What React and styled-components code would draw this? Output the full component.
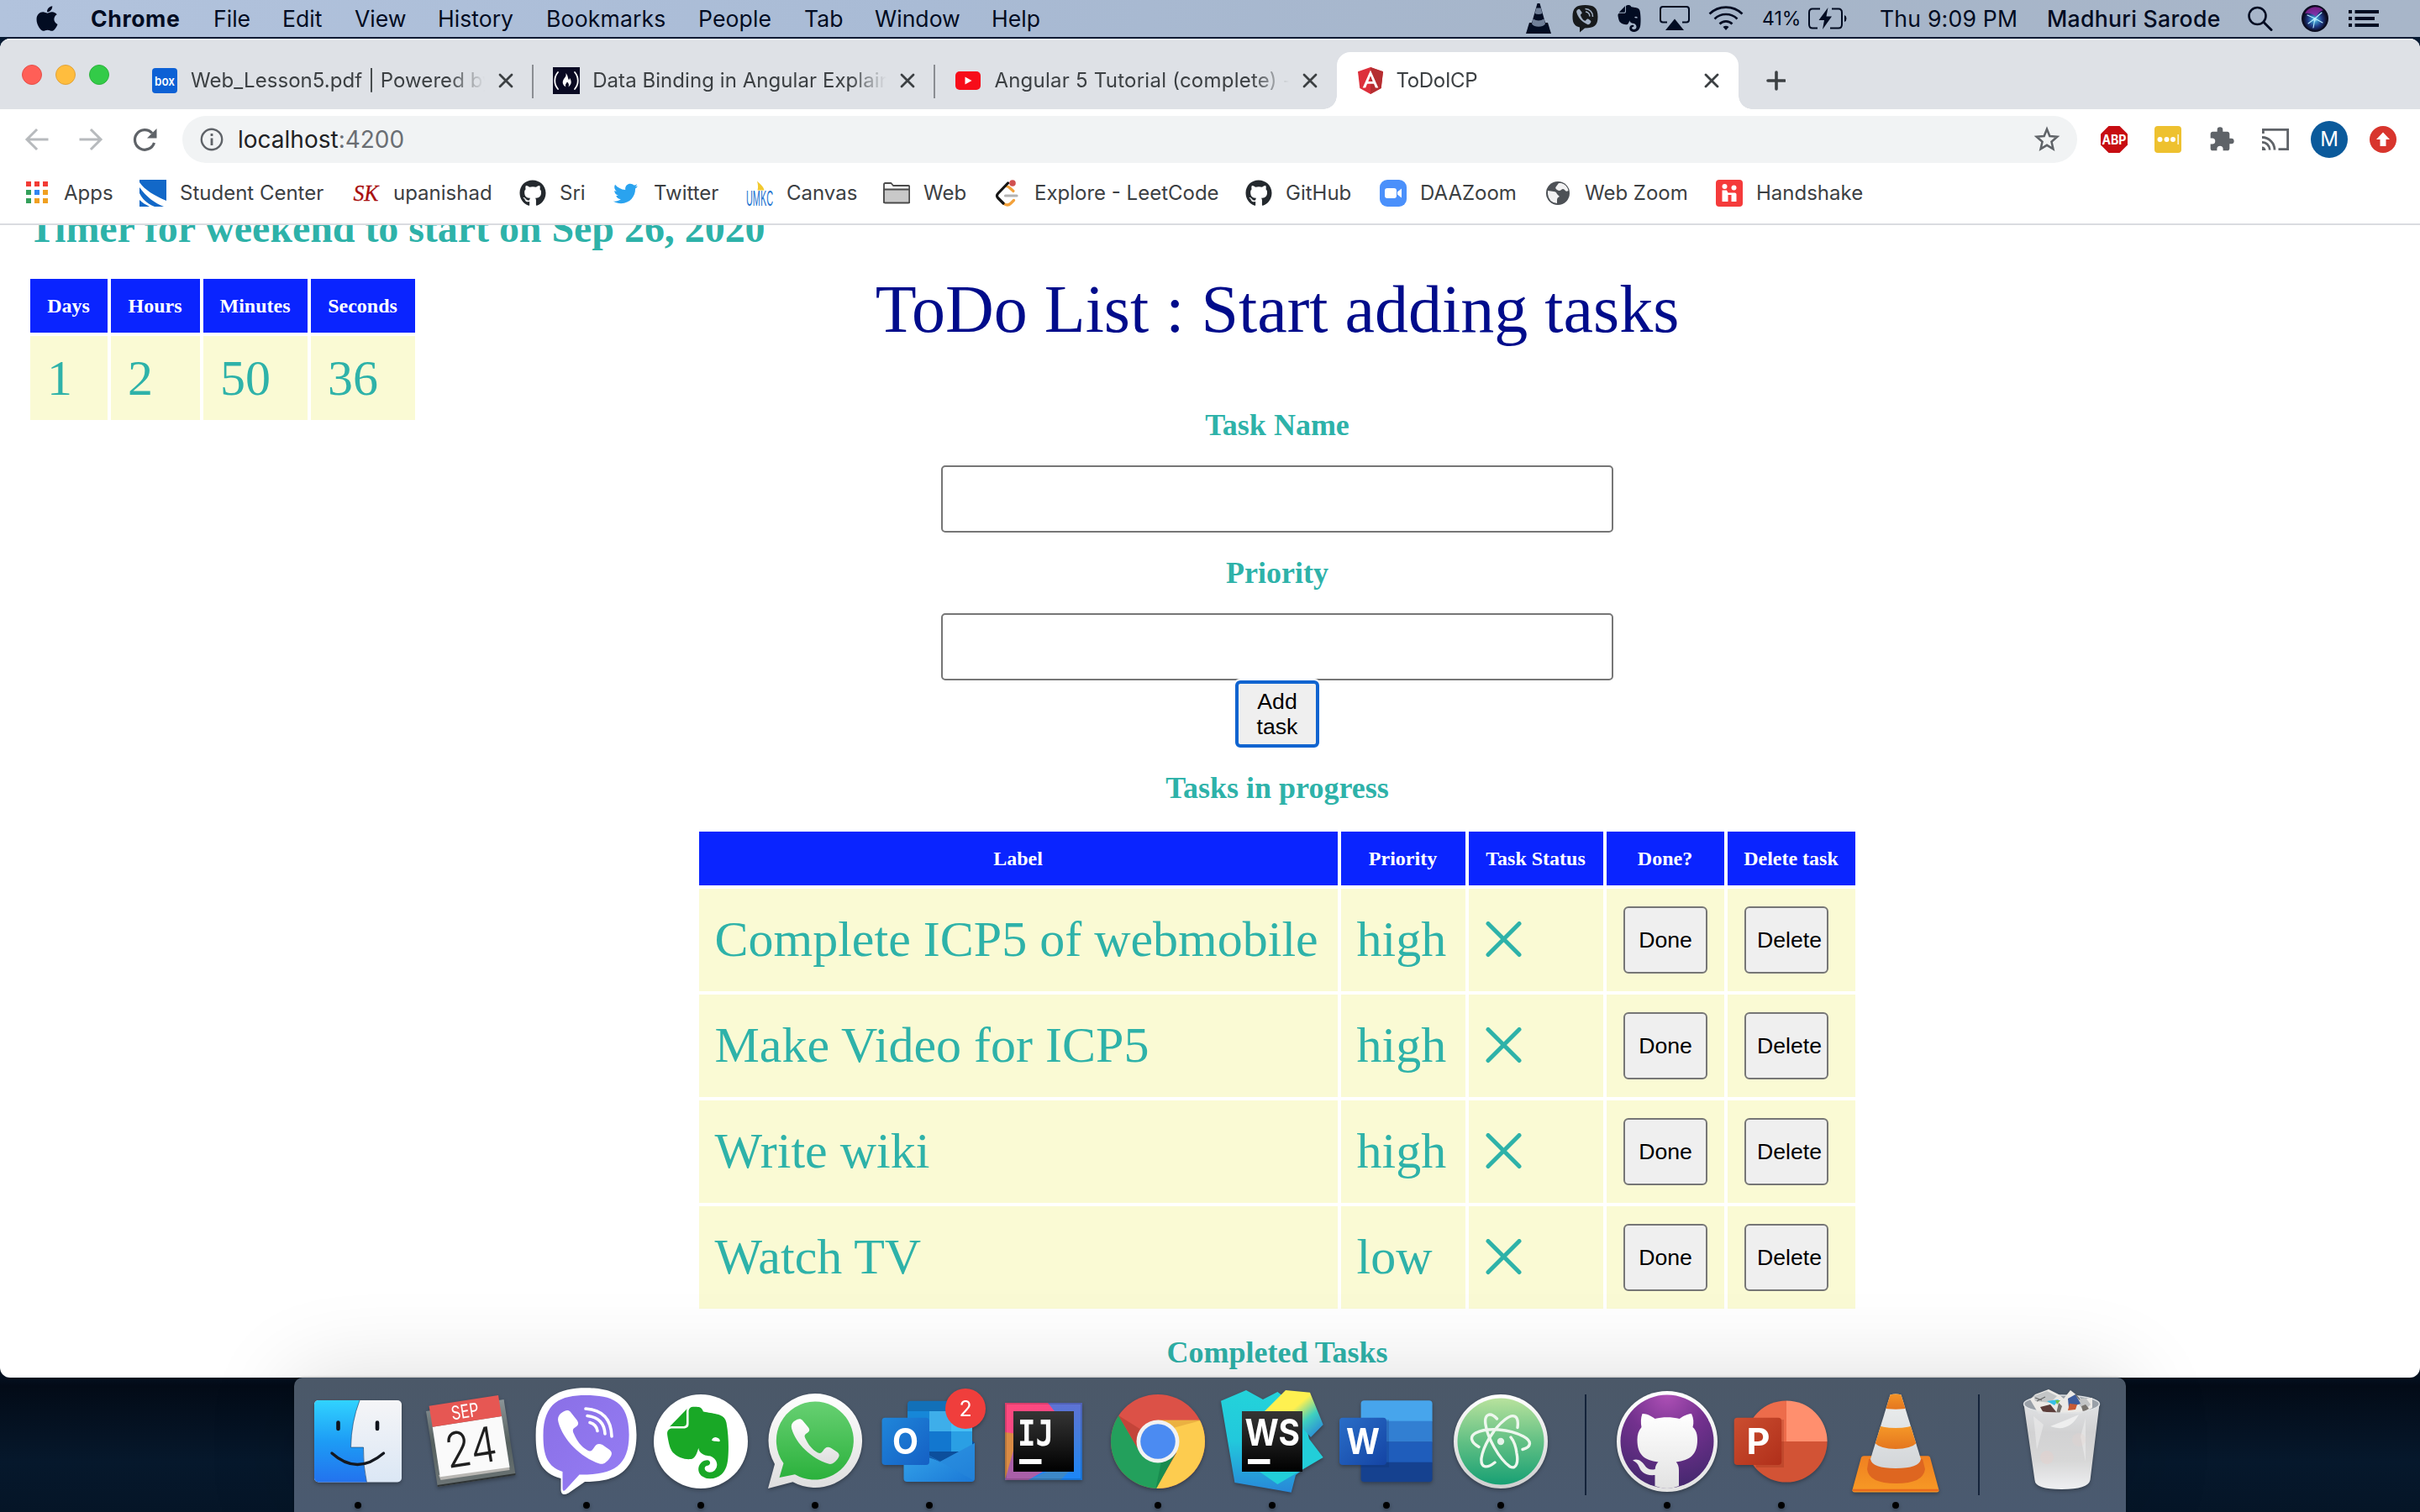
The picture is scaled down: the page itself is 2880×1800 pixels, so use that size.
import React from "react";
import styled, { createGlobalStyle, css } from "styled-components";
import { FaGithub, FaTwitter, FaApple } from "react-icons/fa";
import { SiEvernote } from "react-icons/si";

const serif = '"Liberation Serif", "Times New Roman", serif';
const ui = 'Inter, "Liberation Sans", sans-serif';
const arial = '"Liberation Sans", Arial, sans-serif';
const teal = "#2eb2a9";

const GlobalStyle = createGlobalStyle`
  *, *::before, *::after { box-sizing: border-box; }
  body { margin: 0; background: #030a16; overflow: hidden; }
  svg { display: block; flex: none; }
`;

const Desktop = styled.div`
  width: 2880px;
  height: 1800px;
  display: flex;
  flex-direction: column;
  overflow: hidden;
  background: linear-gradient(180deg, #071a33 0, #04101f 1640px, #030b17 1650px, #06182c 1740px, #051527 1800px);
  font-family: ${ui};
`;

/* ---------- menu bar ---------- */

const MenuBar = styled.header`
  flex: none;
  height: 44px;
  display: flex;
  align-items: center;
  background: linear-gradient(90deg, #b2c3dd 0, #a9bbd5 1100px, #a6b5c9 1900px, #a8b6c9 2880px);
  color: #020c22;
`;

const MenuSlot = styled.div`
  flex: none;
  width: ${(p) => p.$w}px;
  height: 44px;
  display: flex;
  align-items: center;
  white-space: nowrap;
  font-size: ${(p) => p.$size || 26.6}px;
  font-weight: ${(p) => p.$weight || 400};
  letter-spacing: ${(p) => p.$ls || 0}px;
`;

/* ---------- browser window ---------- */

const BrowserWindow = styled.section`
  flex: none;
  margin-top: 2px;
  height: 1594px;
  display: flex;
  flex-direction: column;
  border-radius: 12px;
  background: #fff;
  overflow: hidden;
`;

const TabStrip = styled.div`
  flex: none;
  height: 84px;
  display: flex;
  background: #dee1e6;
  border-top: 2px solid #eceef0;
`;

const TrafficLights = styled.div`
  flex: none;
  width: 156px;
  display: flex;
  gap: 16px;
  padding: 29px 0 0 26px;
`;

const Light = styled.span`
  width: 24px;
  height: 24px;
  border-radius: 50%;
  border: 1px solid ${(p) => p.$edge};
  background: ${(p) => p.$color};
`;

const TabBox = styled.div`
  flex: none;
  width: 478.2px;
  height: 68px;
  margin-top: 14px;
  padding: 0 23px 0 24px;
  display: flex;
  align-items: center;
  position: relative;
  color: #3c4043;
  ${(p) =>
    p.$active &&
    css`
      background: #fff;
      border-radius: 16px 16px 0 0;
      &::before,
      &::after {
        content: "";
        position: absolute;
        bottom: 0;
        width: 16px;
        height: 16px;
      }
      &::before {
        left: -16px;
        background: radial-gradient(circle at 0 0, transparent 15.5px, #fff 16px);
      }
      &::after {
        right: -16px;
        background: radial-gradient(circle at 100% 0, transparent 15.5px, #fff 16px);
      }
    `}
  ${(p) =>
    p.$divider &&
    css`
      &::after {
        content: "";
        position: absolute;
        right: -1px;
        top: 15px;
        width: 2px;
        height: 40px;
        background: #8a8d92;
      }
    `}
`;

const TabTitle = styled.span`
  flex: 1;
  min-width: 0;
  margin: 0 16px 0 15px;
  overflow: hidden;
  white-space: nowrap;
  font-size: 24px;
  line-height: 32px;
  letter-spacing: ${(p) => p.$ls || 0}px;
  mask-image: linear-gradient(90deg, #000 calc(100% - 44px), transparent);
`;

const Toolbar = styled.div`
  flex: none;
  height: 72px;
  display: flex;
  align-items: center;
  padding-left: 28px;
`;

const NavSlot = styled.div`
  flex: none;
  width: ${(p) => p.$w || 64}px;
  display: flex;
`;

const Omnibox = styled.div`
  flex: none;
  width: 2255px;
  height: 56px;
  border-radius: 28px;
  background: #f1f3f4;
  display: flex;
  align-items: center;
  padding: 0 20px 0 21px;
`;

const Url = styled.span`
  flex: 1;
  margin-left: 17px;
  font-size: 28px;
  color: #202124;
`;

const Port = styled.span`
  color: #6a6e73;
`;

const Avatar = styled.div`
  flex: none;
  width: 44px;
  height: 44px;
  border-radius: 50%;
  background: #0b5a9b;
  color: #fff;
  font-size: 24px;
  line-height: 44px;
  text-align: center;
`;

const BookmarkBar = styled.nav`
  flex: none;
  height: 66px;
  padding: 0 0 8px 28px;
  display: flex;
  align-items: center;
  border-bottom: 2px solid #dadce0;
`;

const Bookmark = styled.div`
  flex: none;
  width: ${(p) => p.$w}px;
  display: flex;
  align-items: center;
  gap: 16px;
  white-space: nowrap;
  font-size: 24px;
  line-height: 30px;
  color: #3c4043;
`;

/* ---------- page ---------- */

const Viewport = styled.main`
  flex: 1;
  min-height: 0;
  overflow: hidden;
  font-family: ${serif};
  color: ${teal};
`;

const Scrolled = styled.div`
  margin-top: -24px;
`;

const TimerHeading = styled.h2`
  margin: 0 0 0 36px;
  font-size: 48px;
  line-height: 56px;
  letter-spacing: -0.05px;
  text-indent: -2px;
`;

const Columns = styled.div`
  display: flex;
`;

const Aside = styled.div`
  flex: none;
  width: 832px;
  padding: 32px 0 0 36px;
`;

const Main = styled.div`
  flex: none;
  width: 1376px;
  padding-top: 22px;
  display: flex;
  flex-direction: column;
  align-items: center;
`;

const Title = styled.h1`
  margin: 0;
  font-size: 80px;
  font-weight: 400;
  line-height: 92px;
  color: #000c8b;
`;

const SectionHeading = styled.h3`
  margin: ${(p) => p.$top}px 0 ${(p) => p.$bottom || 27}px;
  font-size: 36px;
  line-height: 42px;
`;

const Field = styled.input`
  display: block;
  width: 800px;
  height: 80px;
  border: 2px solid #767676;
  border-radius: 5px;
  background: #fff;
`;

const Button = styled.button`
  display: block;
  width: 100px;
  height: 80px;
  margin: 0;
  padding: 0 13px;
  border: 2px solid #767676;
  border-radius: 6px;
  background: #efefef;
  color: #000;
  font: 26.67px/30px ${arial};
  ${(p) =>
    p.$focused &&
    css`
      border: 4px solid #1064d0;
      box-shadow: 0 0 0 2px #fff;
      position: relative;
    `}
`;

const Table = styled.div`
  display: grid;
  width: max-content;
  grid-template-columns: ${(p) => p.$columns};
  gap: 4px;
`;

const HeadCell = styled.div`
  height: 64px;
  padding-right: 1px;
  display: flex;
  align-items: center;
  justify-content: center;
  background: #0a24ff;
  color: #fff;
  font-size: 24px;
  font-weight: 700;
  line-height: 28px;
`;

const Cell = styled.div`
  height: ${(p) => p.$h || 122}px;
  padding: ${(p) => (p.$text ? "0 20px 2px 18.500px" : "0 20px 1px 20px")};
  display: flex;
  align-items: center;
  background: #fafad4;
  font-size: 60px;
  line-height: 68px;
  white-space: nowrap;
`;

/* ---------- dock ---------- */

const DockBar = styled.footer`
  flex: none;
  align-self: center;
  width: 2180px;
  height: 160px;
  padding: 0 8px;
  display: flex;
  position: relative;
  border-radius: 10px 10px 0 0;
  background: linear-gradient(180deg, #4b5868, #4a5a70);
  box-shadow: 0 0 3px rgba(0, 0, 0, 0.4), 0 0 110px rgba(0, 0, 0, 0.14);
`;

const DockSlot = styled.div`
  flex: none;
  width: 136px;
  height: 160px;
  position: relative;
  filter: drop-shadow(0 2px 2px rgba(0, 0, 0, 0.3));
`;

const RunningDot = styled.i`
  position: absolute;
  left: 64px;
  bottom: 4px;
  width: 8px;
  height: 8px;
  border-radius: 50%;
  background: #000;
`;

const DockDivider = styled.div`
  flex: none;
  width: 2px;
  height: 120px;
  margin: 20px ${(p) => 60 - p.$before}px 0 ${(p) => p.$before}px;
  background: #14233a;
`;

/* ---------- small icons ---------- */

const Close = () => (
  <svg width="18" height="18" viewBox="0 0 18 18" stroke="#3c4043" strokeWidth="2.8" strokeLinecap="round">
    <path d="M2 2l14 14M16 2L2 16" />
  </svg>
);

const BoxIcon = () => (
  <svg width="32" height="32" viewBox="0 0 32 32">
    <rect x="1" y="1" width="30" height="30" rx="4" fill="#0d61d5" />
    <text x="16" y="21.5" fontFamily={ui} fontWeight="600" fontSize="15" textLength="24" lengthAdjust="spacingAndGlyphs" textAnchor="middle" fill="#fff">box</text>
  </svg>
);

const CampIcon = () => (
  <svg width="32" height="32" viewBox="0 0 32 32">
    <rect width="32" height="32" fill="#0a0a23" />
    <g fill="none" stroke="#fff" strokeWidth="1.8" strokeLinecap="round">
      <path d="M6 6C1 12 1 20 6 26M26 6c5 6 5 14 0 20" />
    </g>
    <path d="M15.500 7c3 4 2 6 3.500 8 .8 0 1-1.500 .8-2.500 2.700 4 2.700 8-1.300 11 1-3 .4-4-1.500-6-1 2-3 3-1.500 6-4.500-2.500-4.500-6.500-2.500-9.500 2-2.500 3-3.500 2.500-7z" fill="#fff" />
  </svg>
);

const YoutubeIcon = () => (
  <svg width="32" height="32" viewBox="0 0 32 32">
    <rect x="1" y="5" width="30" height="22" rx="5" fill="#f70d1a" />
    <path d="M12.500 11.500l8 4.500-8 4.500z" fill="#fff" />
  </svg>
);

const AngularIcon = () => (
  <svg width="32" height="32" viewBox="0 0 32 32">
    <path d="M16 0L1 5.300l2.300 19.700L16 32l12.700-7L31 5.300z" fill="#dd2f3b" />
    <path d="M16 0v32l12.700-7L31 5.300z" fill="#b52e31" />
    <path d="M16 3.500L6.700 24.500h3.500l1.900-4.700h7.900l1.900 4.700h3.400zM16 10.200l2.700 6.700h-5.400z" fill="#fff" fillRule="evenodd" />
  </svg>
);

const Arrow = ({ flip }) => (
  <svg width="32" height="32" viewBox="0 0 32 32" fill="none" stroke="#b7babd" strokeWidth="3" strokeLinecap="square">
    <path d={flip ? "M4 16h23M17 5l11 11-11 11" : "M28 16H5M15 5L4 16l11 11"} />
  </svg>
);

const Reload = () => (
  <svg width="32" height="32" viewBox="0 0 32 32">
    <path d="M27.500 20A11.800 11.800 0 1 1 25 8.500" fill="none" stroke="#5f6368" strokeWidth="3.200" />
    <path d="M30.500 3v11.500H19z" fill="#5f6368" />
  </svg>
);

const InfoIcon = () => (
  <svg width="28" height="28" viewBox="0 0 28 28" fill="none" stroke="#5f6368" strokeWidth="2.400">
    <circle cx="14" cy="14" r="12.200" />
    <path d="M14 12.500V21M14 7v3" strokeWidth="2.800" />
  </svg>
);

const Star = () => (
  <svg width="32" height="32" viewBox="0 0 24 24" fill="none" stroke="#5f6368" strokeWidth="1.900" strokeLinejoin="miter">
    <path d="M12 2.800l2.500 6.200 6.700.6-5.100 4.400 1.500 6.500-5.600-3.400-5.600 3.400 1.500-6.500-5.100-4.400 6.700-.6z" />
  </svg>
);

const Abp = () => (
  <svg width="32" height="32" viewBox="0 0 32 32">
    <path d="M9.500 0h13L32 9.500v13L22.500 32h-13L0 22.500v-13z" fill="#c70d12" />
    <text x="16" y="21.500" fontFamily={ui} fontWeight="700" fontSize="15.500" textLength="29" lengthAdjust="spacingAndGlyphs" textAnchor="middle" fill="#fff">ABP</text>
  </svg>
);

const Dots = () => (
  <svg width="32" height="32" viewBox="0 0 32 32">
    <rect width="32" height="32" rx="4" fill="#eec12f" />
    <g fill="#fff">
      <circle cx="6.500" cy="16" r="3" />
      <circle cx="14.500" cy="16" r="3" />
      <circle cx="22" cy="16" r="3" />
      <rect x="27.500" y="10" width="1.300" height="12" />
    </g>
  </svg>
);

const Puzzle = () => (
  <svg width="32" height="32" viewBox="0 0 24 24" fill="#5f6368">
    <path d="M20.500 11H19V7c0-1.100-.9-2-2-2h-4V3.500a2.500 2.500 0 0 0-5 0V5H4c-1.100 0-2 .9-2 2v3.800h1.500a2.700 2.700 0 0 1 0 5.400H2V20c0 1.100.9 2 2 2h3.800v-1.500a2.700 2.700 0 0 1 5.400 0V22H17c1.100 0 2-.9 2-2v-4h1.500a2.500 2.500 0 0 0 0-5z" />
  </svg>
);

const Cast = () => (
  <svg width="34" height="28" viewBox="0 0 34 28" fill="none" stroke="#5f6368" strokeWidth="2.800">
    <path d="M2.400 7V2.400h29.200v23.200H20.500" />
    <path d="M1 11.500A15 15 0 0 1 16 26.500M1 17.300a9.200 9.200 0 0 1 9.200 9.200" />
    <path d="M1 22.500a4.500 4.500 0 0 1 4.500 4.500H1z" fill="#5f6368" stroke="none" />
  </svg>
);

const Update = () => (
  <svg width="32" height="32" viewBox="0 0 32 32">
    <circle cx="16" cy="16" r="16" fill="#d8352d" />
    <path d="M16 7.500l8 8.500h-4.500v8h-7v-8H8z" fill="#fff" />
  </svg>
);

const AppsIcon = () => {
  const colors = ["#f23c35", "#f23c35", "#f23c35", "#34a05a", "#3286f0", "#f0a020", "#34a05a", "#f0a020", "#f0a020"];
  return (
    <svg width="32" height="32" viewBox="0 0 32 32">
      {colors.map((c, i) => (
        <rect key={i} x={3 + (i % 3) * 10} y={2 + Math.floor(i / 3) * 10} width="6" height="6" fill={c} />
      ))}
    </svg>
  );
};

const StudentIcon = () => (
  <svg width="32" height="32" viewBox="0 0 32 32">
    <rect width="32" height="32" fill="#1268c8" />
    <path d="M0 3c6 9 18 16 32 22v7h-3C18 28 8 20 0 9z" fill="#fff" />
    <path d="M0 12c4 7 12 14 24 20h-8C8 28 4 24 0 18z" fill="#1268c8" />
    <path d="M0 16c3 6 8 12 18 16h-6C8 30 3 27 0 24z" fill="#fff" />
  </svg>
);

const SkIcon = () => (
  <svg width="32" height="32" viewBox="0 0 32 32">
    <text x="15.500" y="24.500" fontFamily={serif} fontStyle="italic" fontSize="28" textLength="30" lengthAdjust="spacingAndGlyphs" textAnchor="middle" fill="#a80d0d" stroke="#a80d0d" strokeWidth="0.300">SK</text>
  </svg>
);

const UmkcIcon = () => (
  <svg width="32" height="32" viewBox="0 0 32 32">
    <path d="M13 1.500c4 4 7.500 6 8.500 11h-8c1-4 .5-7-.5-11z" fill="#f2c92f" />
    <text x="0" y="31" fontFamily={arial} fontSize="26" textLength="32" lengthAdjust="spacingAndGlyphs" fill="#2273d0">UMKC</text>
  </svg>
);

const FolderIcon = () => (
  <svg width="32" height="32" viewBox="0 0 32 32" stroke="#4a4a4a" strokeWidth="1.800" strokeLinejoin="round">
    <path d="M1 27V5.500Q1 4 2.500 4h7L12 7h18q1.200 0 1.200 1.500V27z" fill="#f6f6f6" />
    <path d="M1 11.500h30.200V26q0 1.500-1.500 1.500H2.500Q1 27.500 1 26z" fill="#c9c9c9" />
  </svg>
);

const LeetIcon = () => (
  <svg width="32" height="32" viewBox="0 0 32 32" fill="none" strokeWidth="3.200" strokeLinecap="round" strokeLinejoin="round">
    <path d="M11 28q5 4 9 0l3.500-3.500" stroke="#f3a13a" />
    <path d="M15.500 8q1.500 0 3 1.500l4.500 4" stroke="#f3a13a" />
    <path d="M16.500 4L5 16q-3 3 0 6l6 6" stroke="#161616" />
    <path d="M13.500 19h13.500" stroke="#b3b3b3" />
    <circle cx="22" cy="4" r="3.800" fill="#d05050" />
  </svg>
);

const ZoomIcon = () => (
  <svg width="32" height="32" viewBox="0 0 32 32">
    <rect width="32" height="32" rx="9" fill="#4a90fb" />
    <rect x="6" y="10" width="14" height="12" rx="3" fill="#fff" />
    <path d="M21 14.500l5-4v11l-5-4z" fill="#fff" />
  </svg>
);

const Globe = () => (
  <svg width="32" height="32" viewBox="0 0 32 32">
    <circle cx="16" cy="16" r="14" fill="#4d5156" />
    <path d="M4 13l7 1q3 0 4 3l3 3q-3 1-3 4v4Q5 27 4 17zM17 4l3 0q7 2 8.500 9-3 2-4.500-1-2-2-4 0t-5 0q-3-2-1-4z" fill="#fff" opacity=".92" />
  </svg>
);

const HandshakeIcon = () => (
  <svg width="32" height="32" viewBox="0 0 32 32">
    <rect width="32" height="32" rx="4" fill="#f53b3b" />
    <g fill="#fff">
      <circle cx="10.500" cy="8" r="3" />
      <circle cx="21.500" cy="9.500" r="3" />
      <path d="M7.500 12.500h5.500l1.500 3h8q2 0 2 2V26H18.500v-8h-4V26h-7z" />
    </g>
  </svg>
);

const VlcMini = () => (
  <svg width="30" height="36" viewBox="0 0 30 36" fill="#020c22">
    <path d="M4 23h22l4 13H0z" />
    <path d="M13.500 0h3l7 25a9.500 9.500 0 0 1-17 0z" />
    <path d="M12.400 5.500h5.400L19.500 12q-4.500 2-9 0zM8.500 18.500q6.500 4 13 0l1.500 6a9 6 0 0 1-16 0z" fill="#6f7f98" />
  </svg>
);

const handset =
  "M34 50C34 46 36 43.500 39 41.500C43 38.500 46.500 38 49 41L56.500 50.500C59 54 58.500 56.500 55.500 58.500C51.500 61 51 62.500 53 67C56.500 75.500 62 82.500 69 86.500C72 88 74 88 76.500 84C79 79.500 82 77.500 87 80L95.500 86C99 89 98.500 92 95.500 96C92 100.500 88.500 104 83.500 102.500C61 95 40 74 34.500 53Z";

const ViberMini = () => (
  <svg width="31" height="34" viewBox="0 0 31 34">
    <path d="M15.500 1C26 1 30.500 4 30.500 15S26 28 15 28.500L9 33.500V27.500C2.500 26 .5 22 .5 15 .5 4 5 1 15.500 1z" fill="#171a1c" />
    <path d={handset} fill="#a3b1c4" transform="translate(-4 -5.500) scale(.27 .29)" />
    <path d="M15.500 5.500a9 9 0 0 1 9 9.500M16 9a5 5 0 0 1 4.800 5.500" fill="none" stroke="#a3b1c4" strokeWidth="1.500" />
  </svg>
);

const AirplayIcon = () => (
  <svg width="36" height="30" viewBox="0 0 36 30">
    <path d="M9 19.500H4q-3 0-3-3V4q0-3 3-3h28q3 0 3 3v12.500q0 3-3 3h-5" fill="none" stroke="#020c22" strokeWidth="2" />
    <path d="M18 15.500L29 29H7z" fill="#020c22" />
  </svg>
);

const WifiIcon = () => (
  <svg width="42" height="30" viewBox="0 0 42 30" fill="none" stroke="#020c22" strokeWidth="2.600">
    <path d="M1.500 9.500a28 28 0 0 1 39 0M7.500 15.500a19.500 19.500 0 0 1 27 0M13.500 21.500a10.500 10.500 0 0 1 15 0" />
    <path d="M17.500 25q3.500-2.500 7 0L21 29z" fill="#020c22" stroke="none" />
  </svg>
);

const Battery = () => (
  <svg width="46" height="26" viewBox="0 0 46 26" fill="none" stroke="#020c22" strokeWidth="2">
    <path d="M14 1.500H5Q1 1.500 1 6v14q0 4.500 4 4.500h6M28 1.500h8Q40 1.500 40 6v14q0 4.500-4 4.500H26" />
    <path d="M43 9v8q2.500-1 2.500-4T43 9z" fill="#020c22" stroke="none" />
    <path d="M23.500 0L12.500 15h6.500l-2 11L28 10.500h-6.500z" fill="#020c22" stroke="none" />
  </svg>
);

const SearchIcon = () => (
  <svg width="30" height="30" viewBox="0 0 30 30" fill="none" stroke="#020c22" strokeWidth="2.600" strokeLinecap="round">
    <circle cx="11.500" cy="12" r="10" />
    <path d="M19 19.500l9 9" strokeWidth="3" />
  </svg>
);

const SiriIcon = () => (
  <svg width="32" height="32" viewBox="0 0 32 32">
    <defs>
      <radialGradient id="siri" cx=".5" cy=".55" r=".5">
        <stop offset="0" stopColor="#c8f4ff" />
        <stop offset=".22" stopColor="#3a93c8" />
        <stop offset=".6" stopColor="#1f3a86" />
        <stop offset="1" stopColor="#0a0b22" />
      </radialGradient>
    </defs>
    <circle cx="16" cy="16" r="16" fill="#0b0c20" />
    <circle cx="16" cy="16" r="14" fill="url(#siri)" />
    <path d="M4 10a14 14 0 0 1 22-4q-6 2-9 8-5-5-13-4z" fill="#9a2aa8" opacity=".75" />
    <path d="M16 16L7 12M16 16l8-7M16 16l9 5M16 16l-2 11M16 16l-8 6" stroke="#b8f0ff" strokeWidth="1.100" strokeLinecap="round" />
  </svg>
);

const ListIcon = () => (
  <svg width="36" height="22" viewBox="0 0 36 22" fill="#020c22">
    <path d="M0 1h4v4H0zM7.500 1H36v4H7.500zM0 9h4v4H0zM7.500 9H31v4H7.500zM0 17h4v4H0zM7.500 17H36v4H7.500z" />
  </svg>
);

const Cross = () => (
  <svg width="44" height="44" viewBox="0 0 44 44" stroke={teal} strokeWidth="5" strokeLinecap="round">
    <path d="M3 2.500l37 37M40 2.500l-37 37" />
  </svg>
);

/* ---------- dock icons ---------- */

const Art = ({ children }) => (
  <svg width="136" height="160" viewBox="0 0 136 160">
    {children}
  </svg>
);

const Grad = ({ id, stops, diag }) => (
  <linearGradient id={id} x1="0" y1="0" x2={diag ? 1 : 0} y2="1">
    {stops.map((c, i) => (
      <stop key={i} offset={i / (stops.length - 1)} stopColor={c} />
    ))}
  </linearGradient>
);

const Finder = () => (
  <Art>
    <defs>
      <Grad id="fin1" stops={["#31d3ff", "#1d9cf5", "#2372ee"]} />
      <Grad id="fin2" stops={["#f5f5f7", "#dbe7f5"]} />
      <clipPath id="finc"><rect x="16" y="27" width="104" height="97.500" rx="5" /></clipPath>
    </defs>
    <g clipPath="url(#finc)">
      <rect x="16" y="27" width="104" height="98" fill="url(#fin2)" />
      <path d="M16 27H70Q60 53 59.500 83H74.500Q74 105 78.500 125H16z" fill="url(#fin1)" />
      <path d="M70 27Q60 53 59.500 83H74.500Q74 105 78.500 125" fill="none" stroke="#153c66" strokeWidth="1" opacity=".6" />
    </g>
    <path d="M44.500 53.500v7.500M91 53.500v7.500" stroke="#10141c" strokeWidth="4.600" strokeLinecap="round" />
    <path d="M37 90q30 27 61.500 0" fill="none" stroke="#14181f" strokeWidth="3.400" strokeLinecap="round" />
  </Art>
);

const Calendar = () => (
  <Art>
    <defs><Grad id="cal" stops={["#8b9598", "#55605f", "#6e7677"]} /></defs>
    <path d="M13 40l92.600-14L119.500 115.700 26.800 130z" fill="url(#cal)" />
    <path d="M26.500 128l93-14v2l-92.700 14z" fill="#2e3334" />
    <path d="M28 116l84-12 .5 6L30.500 122z" fill="#b9b7b3" />
    <path d="M20.700 58.700L103 46l9.500 60.700L29.700 118.300z" fill="#fafafa" />
    <path d="M16.600 33.700L99 21l4 25-82.300 12.700z" fill="#e65753" />
    <text transform="translate(60.500 48) rotate(-9)" fontFamily={ui} fontSize="22.500" textLength="33" lengthAdjust="spacingAndGlyphs" textAnchor="middle" fill="#fff">SEP</text>
    <text transform="translate(69.500 103.500) rotate(-9)" fontFamily={ui} fontSize="58" fontWeight="300" textLength="62" lengthAdjust="spacingAndGlyphs" textAnchor="middle" fill="#1f1f1f">24</text>
  </Art>
);

const Viber = () => (
  <Art>
    <defs><Grad id="vib" diag stops={["#8a6fe6", "#957df4"]} /></defs>
    <path d="M67 12.300C92 12.300 127.500 18 127.500 68C127.500 116 98 124 66 124L46.500 137.500Q38 142 37.500 134V120C14 114 7.600 98 7.600 69C7.600 22 37 12.300 67 12.300z" fill="#fff" />
    <path d="M67 21C98 21 118.600 28 118.600 68C118.600 106 99 116 59.500 115.500L43 133.500Q39.500 137 39.500 131V112C22 106 16.500 94 16.500 69C16.500 29 38 21 67 21z" fill="url(#vib)" />
    <path d={handset} fill="#fff" />
    <g fill="none" stroke="#fff" strokeWidth="3.600" strokeLinecap="round">
      <path d="M67 37Q97 39 98 70" />
      <path d="M69 45.500Q89 48 90 67" />
      <path d="M72 53.500Q80 56 81 63.500" />
    </g>
  </Art>
);

const Evernote = () => (
  <Art>
    <circle cx="68" cy="76" r="56" fill="#fff" />
    <g transform="translate(21.500 34.500)">
      <SiEvernote size={86} color="#19a826" />
    </g>
  </Art>
);

const WhatsApp = () => (
  <Art>
    <defs>
      <Grad id="wa1" stops={["#ffffff", "#dedede"]} />
      <Grad id="wa2" stops={["#67d072", "#2bb13c"]} />
    </defs>
    <path d="M68 19A56 56 0 1 1 41.500 124.300L12 132 20 103A56 56 0 0 1 68 19z" fill="url(#wa1)" />
    <path d="M68 28.500A46.500 46.500 0 1 1 44 115.200L25.500 119 30.500 102A46.500 46.500 0 0 1 68 28.500z" fill="url(#wa2)" />
    <path d={handset} fill="url(#wa1)" transform="translate(9.500 16.500) scale(.89 .84)" />
  </Art>
);

const Outlook = () => (
  <Art>
    <defs>
      <Grad id="ol1" diag stops={["#1f86da", "#1560c4"]} />
      <Grad id="ol2" diag stops={["#37a9ec", "#1b78d6"]} />
    </defs>
    <path d="M42 40V32q0-4.300 4-4.300h69q4 0 4 4.300v8z" fill="#1270b8" />
    <rect x="42" y="40" width="26" height="24" fill="#1687d8" />
    <rect x="68" y="40" width="26" height="24" fill="#3eaeea" />
    <rect x="94" y="40" width="25" height="24" fill="#45c0f5" />
    <rect x="42" y="64" width="26" height="24" fill="#0f6ac0" />
    <rect x="68" y="64" width="26" height="24" fill="#1277cf" />
    <rect x="94" y="64" width="25" height="24" fill="#2a9fe4" />
    <path d="M119 75l3 3v10h-3zM42 88h77L81 102 68 96z" fill="#0c4f9c" />
    <path d="M37.500 84L81 100 122 78v42q0 4-4 4H41.500q-4 0-4-4z" fill="url(#ol2)" />
    <path d="M81 100L120.500 122.500Q122 121 122 118V78z" fill="#2787da" opacity=".55" />
    <path d="M58 88l23 12.300" stroke="#1b6fc2" strokeWidth="1" />
    <rect x="11.500" y="47.700" width="56.500" height="56.300" rx="4" fill="url(#ol1)" />
    <text x="39.500" y="91" fontFamily={ui} fontSize="42" fontWeight="700" textLength="31" lengthAdjust="spacingAndGlyphs" textAnchor="middle" fill="#fff">O</text>
    <circle cx="111" cy="37" r="24" fill="#f03e3c" />
    <text x="111" y="46" fontFamily={ui} fontSize="25" textAnchor="middle" fill="#fff">2</text>
  </Art>
);

const JetBox = ({ letters, x, w, font }) => (
  <>
    <defs><Grad id="jb" stops={["#353535", "#000000"]} /></defs>
    <rect x="32" y="40" width="72" height="72" fill="url(#jb)" />
    <text x={x} y="80.700" fontFamily={font} fontWeight="700" fontSize="43.500" textLength={w} lengthAdjust="spacingAndGlyphs" fill="#fff">{letters}</text>
    <rect x="39" y="97" width="26.500" height="6" fill="#fff" />
  </>
);

const IntelliJ = () => (
  <Art>
    <defs>
      <Grad id="ij1" diag stops={["#fe4a7c", "#f6468c"]} />
      <Grad id="ij2" stops={["#5f72d4", "#3f7fe0", "#1a86f8"]} />
    </defs>
    <rect x="22" y="30" width="92" height="92" fill="url(#ij2)" />
    <path d="M22 30H73l30 38-60 0-21 0z" fill="url(#ij1)" />
    <path d="M22 65l14 2-4 30-10 24z" fill="#d98b45" />
    <path d="M22 122l10-35 40 22-22 13z" fill="#a95fa8" />
    <path d="M50 122l22-10h26l-10 10z" fill="#3c88c8" />
    <rect x="23" y="31" width="90" height="90" fill="none" stroke="rgba(0,0,0,.14)" strokeWidth="2" />
    <JetBox letters="IJ" x="37" w="43" font='"DejaVu Sans Mono", monospace' />
  </Art>
);

const Chrome = () => (
  <Art>
    <defs><clipPath id="chc"><circle cx="68" cy="76" r="56" /></clipPath></defs>
    <g clipPath="url(#chc)">
      <rect x="10" y="18" width="116" height="116" fill="#dc5147" />
      <path d="M68 50.700H130V134H64L90 90z" fill="#fdcc4f" />
      <path d="M68 50.700H120L86 60z" fill="#e3a53c" opacity=".7" />
      <path d="M12 30L21 45 46 88 90 88 65 134H0V40z" fill="#23a05c" />
      <path d="M21 45L44 84 48 62z" fill="#b33c30" opacity=".6" />
      <path d="M90 89L65 134 72 100z" fill="#16834a" opacity=".7" />
    </g>
    <circle cx="68" cy="76" r="25.500" fill="#f2f2f2" />
    <circle cx="68" cy="76" r="20.800" fill="#4b8bf2" />
  </Art>
);

const WebStorm = () => (
  <Art>
    <defs>
      <Grad id="ws1" stops={["#23d3da", "#22c8dc", "#2887d8"]} />
      <linearGradient id="ws2" gradientUnits="userSpaceOnUse" x1="84" y1="22" x2="122" y2="66">
        <stop offset=".1" stopColor="#fef050" />
        <stop offset=".3" stopColor="#fef050" />
        <stop offset=".65" stopColor="#3fd0c0" />
        <stop offset="1" stopColor="#2b8fd6" />
      </linearGradient>
    </defs>
    <path d="M7 27.700L37 15 57 26 74.400 17 104 40 104 110 96 116 90.700 136.700 23.400 125z" fill="url(#ws1)" />
    <path d="M50 80L104 40 112 73 128.700 95 74.400 127 50 110z" fill="#22ced9" />
    <path d="M59 40L84 15 113 17.700 128.700 56 114 71 104 60z" fill="url(#ws2)" />
    <JetBox letters="WS" x="35.500" w="65.500" font={ui} />
  </Art>
);

const Word = () => (
  <Art>
    <defs>
      <Grad id="wd1" diag stops={["#2a6ec8", "#1444a4"]} />
      <clipPath id="wdc"><rect x="37.600" y="27.300" width="85" height="97" rx="4" /></clipPath>
    </defs>
    <g clipPath="url(#wdc)">
      <rect x="37" y="27" width="86" height="25" fill="#47a5ec" />
      <rect x="37" y="51.700" width="86" height="25" fill="#327fd2" />
      <rect x="37" y="76.300" width="86" height="25" fill="#1f5dbb" />
      <rect x="37" y="100.700" width="86" height="25" fill="#15418f" />
      <rect x="37" y="50" width="34" height="57" fill="#0a2a66" opacity=".2" />
    </g>
    <rect x="12" y="47.700" width="56" height="56.300" rx="4" fill="url(#wd1)" />
    <text x="40" y="90.700" fontFamily={ui} fontSize="42" fontWeight="700" textLength="40" lengthAdjust="spacingAndGlyphs" textAnchor="middle" fill="#fff">W</text>
  </Art>
);

const Atom = () => (
  <Art>
    <defs>
      <Grad id="at1" stops={["#b8e29d", "#62c084", "#18a074"]} />
      <Grad id="at2" stops={["#ffffff", "#cfcfcf"]} />
    </defs>
    <circle cx="68" cy="76" r="56" fill="url(#at2)" />
    <circle cx="68" cy="76" r="51.500" fill="url(#at1)" />
    <g fill="none" stroke="#eef7ee" strokeWidth="3.400" strokeLinecap="round">
      <path d="M42 82.500C32 77 31 70 38 66C52 59 78 61 95 70C106 76 104 83 94 85.500" />
      <path d="M63.500 49C55 40 48 44 50 56C52 71 66 97 79 106C87 110 89 100 87 90C86 82 84 76 80 71" />
      <path d="M88 59.500C90 45 83 42 73 50C59 61 47 82 45 96C44 107 51 109 61 101" />
    </g>
    <circle cx="68" cy="76" r="4.200" fill="#e6f4ea" />
  </Art>
);

const GithubDesktop = () => (
  <Art>
    <defs>
      <radialGradient id="gh1" cx=".5" cy="0" r="1">
        <stop offset="0" stopColor="#ae50b6" />
        <stop offset=".45" stopColor="#73318e" />
        <stop offset="1" stopColor="#45286f" />
      </radialGradient>
      <Grad id="gh2" stops={["#ffffff", "#e2e2e2"]} />
    </defs>
    <circle cx="68" cy="76" r="60" fill="url(#gh2)" />
    <circle cx="68" cy="76" r="55.500" fill="url(#gh1)" />
    <path d="M38.500 43C43 42.500 49 45.500 53.500 49C63 46.700 73 46.700 82.800 49C87.500 45.500 93 43 97 43C99.500 48 100 54 98.500 59C103 63 104 68 104 74C104 92 95 98.500 78.700 100.500C81 103 82 106 82 110V129Q68 135 53.500 129V116C41 117 37 112 34.500 106C33 102 30 100 27 98.500C32 95.500 38 99 41 104C44 109 49 110.500 53.700 109C54 105 55.500 102.500 57.500 100.500C41 98.500 32.500 92 32.500 74C32.500 68 34 63 37.500 59C36.500 54 36.500 48 38.500 43z" fill="url(#gh2)" />
  </Art>
);

const PowerPoint = () => (
  <Art>
    <defs><Grad id="pp1" diag stops={["#cb4e30", "#b02f1a"]} /></defs>
    <path d="M74 27.400A48.600 48.600 0 0 0 25.400 76H74z" fill="#ed6c4b" />
    <path d="M74 27.400A48.600 48.600 0 0 1 122.600 76H74z" fill="#ff8f6e" />
    <path d="M25.400 76A48.600 48.600 0 0 0 122.600 76z" fill="#d25335" />
    <path d="M32 50h39v57H38z" fill="#7a1c08" opacity=".2" />
    <rect x="11.700" y="47.700" width="56.500" height="56.300" rx="4" fill="url(#pp1)" />
    <text x="40.500" y="90.700" fontFamily={ui} fontSize="42" fontWeight="700" textLength="28" lengthAdjust="spacingAndGlyphs" textAnchor="middle" fill="#fff">P</text>
  </Art>
);

const Vlc = () => (
  <Art>
    <defs>
      <Grad id="vl1" stops={["#f08021", "#f79a25"]} />
      <Grad id="vl2" stops={["#eef0f0", "#d2d5d8"]} />
      <Grad id="vl3" stops={["#f79b28", "#e4761f"]} />
      <clipPath id="vlc"><path d="M61.500 20.500Q68 18.500 74.500 20.500L98 97Q96 108 68 108T38 97z" /></clipPath>
    </defs>
    <path d="M30 93.300H106.500Q108.400 93.300 109 95L119.400 133.500Q120 136.500 117 136.500H19Q16 136.500 16.500 133.500L27 95Q28 93.300 30 93.300z" fill="url(#vl1)" />
    <path d="M17 134h102" stroke="#e8691c" strokeWidth="2.500" />
    <path d="M36 97L34 109Q36 126 68.500 126T103 109L100 97z" fill="#de6620" />
    <g clipPath="url(#vlc)">
      <rect x="30" y="18" width="76" height="92" fill="url(#vl2)" />
      <path d="M50 15H86V36Q68 39.500 50 36z" fill="url(#vl3)" />
      <path d="M42 55Q52 60 68 60T94 55V77Q86 85 68 85T42 77z" fill="url(#vl3)" />
    </g>
  </Art>
);

const Trash = () => (
  <Art>
    <defs><Grad id="tr1" stops={["#e4e6e8", "#d6d6d7", "#dcdcdc", "#f4f5f6"]} /></defs>
    <ellipse cx="67.500" cy="31.500" rx="45" ry="10.500" fill="#99a0a8" stroke="#dde0e3" strokeWidth="1.500" />
    <path d="M30 26L36 20 52 14 64 20 70 25 78 15 92 26 104 24V36L90 43H40z" fill="#ebe9e6" />
    <path d="M34 22l16-6 12 6-8 8-18-2zM84 26l12-2 6 8-8 8z" fill="#c3c5c6" />
    <path d="M42 35l12-3 8 10-16 0z" fill="#5b3d3a" />
    <path d="M50 28l14-2-5 7z" fill="#36bfe6" />
    <path d="M60 27l6 0-4 5z" fill="#6cc24a" />
    <path d="M75 25l9-5 6 11-14 5z" fill="#3d5c9c" />
    <path d="M77 31l9 1-2 6-9 1z" fill="#c85a35" />
    <path d="M64 30l4 4-3 9-4 0zM91 34l5-2 4 5-7 4z" fill="#77736e" />
    <path d="M36 24l8 3M38 28l10-5M84 20l5 6" stroke="#666" strokeWidth="1.200" />
    <path d="M22.500 31.500Q28 41.500 67.500 41.500T112.500 31.500L101.500 122Q99 133 67.500 133T35.500 122z" fill="url(#tr1)" opacity=".97" />
    <path d="M54 58Q76 66 88 44L74 50z" fill="#f1f1f1" opacity=".9" />
    <path d="M34 46l12 10-8 30zM96 48l-6 22 6 30z" fill="#eeeeee" opacity=".55" />
    <circle cx="50" cy="95" r="8" fill="#e9cfc9" opacity=".4" />
    <circle cx="88" cy="74" r="8" fill="#e8d3cc" opacity=".3" />
  </Art>
);

/* ---------- data ---------- */

const menus = [
  ["File", 82, 0], ["Edit", 86, 0], ["View", 99, 0], ["History", 129, 0], ["Bookmarks", 181, 0.15],
  ["People", 126, 0.1], ["Tab", 84, 0], ["Window", 139, 0], ["Help", 636, 0],
];

const tabs = [
  { icon: <BoxIcon />, title: "Web_Lesson5.pdf | Powered by Box", divider: true, ls: 0.05 },
  { icon: <CampIcon />, title: "Data Binding in Angular Explained", divider: true, ls: 0.06 },
  { icon: <YoutubeIcon />, title: "Angular 5 Tutorial (complete) - Learn", ls: 0.24 },
  { icon: <AngularIcon />, title: "ToDoICP", active: true, ls: -0.35 },
];

const bookmarks = [
  [<AppsIcon />, "Apps", 138],
  [<StudentIcon />, "Student Center", 254],
  [<SkIcon />, "upanishad", 198],
  [<FaGithub size={32} color="#24292e" />, "Sri", 112],
  [<FaTwitter size={29} color="#2aa3ef" style={{ marginRight: 3 }} />, "Twitter", 158],
  [<UmkcIcon />, "Canvas", 163],
  [<FolderIcon />, "Web", 132],
  [<LeetIcon />, "Explore - LeetCode", 299],
  [<FaGithub size={32} color="#24292e" />, "GitHub", 160],
  [<ZoomIcon />, "DAAZoom", 196],
  [<Globe />, "Web Zoom", 204],
  [<HandshakeIcon />, "Handshake", 200],
];

const countdown = [["Days", "1"], ["Hours", "2"], ["Minutes", "50"], ["Seconds", "36"]];

const tasks = [
  ["Complete ICP5 of webmobile", "high"],
  ["Make Video for ICP5", "high"],
  ["Write wiki", "high"],
  ["Watch TV", "low"],
];

const dockGroups = [
  [[Finder, true], [Calendar, false], [Viber, true], [Evernote, true], [WhatsApp, true], [Outlook, true],
    [IntelliJ, false], [Chrome, true], [WebStorm, true], [Word, true], [Atom, true]],
  [[GithubDesktop, true], [PowerPoint, true], [Vlc, true]],
  [[Trash, false]],
];

/* ---------- app ---------- */

export default function App() {
  return (
    <Desktop>
      <GlobalStyle />
      <MenuBar>
        <MenuSlot $w={39} />
        <MenuSlot $w={69}><FaApple size={34} /></MenuSlot>
        <MenuSlot $w={146} $weight={700} $ls={0.6}>Chrome</MenuSlot>
        {menus.map(([label, w, ls]) => (
          <MenuSlot key={label} $w={w} $ls={ls}>{label}</MenuSlot>
        ))}
        <MenuSlot $w={55}><VlcMini /></MenuSlot>
        <MenuSlot $w={52}><ViberMini /></MenuSlot>
        <MenuSlot $w={52}><SiEvernote size={32} /></MenuSlot>
        <MenuSlot $w={58}><AirplayIcon /></MenuSlot>
        <MenuSlot $w={64}><WifiIcon /></MenuSlot>
        <MenuSlot $w={55} $size={23}>41%</MenuSlot>
        <MenuSlot $w={85}><Battery /></MenuSlot>
        <MenuSlot $w={199} $ls={0.2}>Thu 9:09 PM</MenuSlot>
        <MenuSlot $w={239} $weight={500} $ls={0.3}>Madhuri Sarode</MenuSlot>
        <MenuSlot $w={64}><SearchIcon /></MenuSlot>
        <MenuSlot $w={56}><SiriIcon /></MenuSlot>
        <MenuSlot $w={40}><ListIcon /></MenuSlot>
      </MenuBar>

      <BrowserWindow>
        <TabStrip>
          <TrafficLights>
            <Light $color="#ff5f57" $edge="#e5504a" />
            <Light $color="#ffbd3e" $edge="#e0a33a" />
            <Light $color="#33cb48" $edge="#2db23c" />
          </TrafficLights>
          {tabs.map((t) => (
            <TabBox key={t.title} $active={t.active} $divider={t.divider}>
              {t.icon}
              <TabTitle $ls={t.ls}>{t.title}</TabTitle>
              <Close />
            </TabBox>
          ))}
          <NavSlot $w={100}>
            <svg width="56" height="60" viewBox="0 0 56 60" stroke="#3c4043" strokeWidth="3.600" strokeLinecap="round">
              <path d="M45 38v20M35 48h20" />
            </svg>
          </NavSlot>
        </TabStrip>

        <Toolbar>
          <NavSlot><Arrow /></NavSlot>
          <NavSlot><Arrow flip /></NavSlot>
          <NavSlot $w={61}><Reload /></NavSlot>
          <Omnibox>
            <InfoIcon />
            <Url>localhost<Port>:4200</Port></Url>
            <Star />
          </Omnibox>
          <NavSlot $w={28} />
          <NavSlot><Abp /></NavSlot>
          <NavSlot><Dots /></NavSlot>
          <NavSlot $w={63}><Puzzle /></NavSlot>
          <NavSlot $w={59}><Cast /></NavSlot>
          <NavSlot $w={70}><Avatar>M</Avatar></NavSlot>
          <Update />
        </Toolbar>

        <BookmarkBar>
          {bookmarks.map(([icon, label, w]) => (
            <Bookmark key={label} $w={w}>
              {icon}
              {label}
            </Bookmark>
          ))}
        </BookmarkBar>

        <Viewport>
          <Scrolled>
            <TimerHeading>Timer for weekend to start on Sep 26, 2020</TimerHeading>
            <Columns>
              <Aside>
                <Table $columns="92px 106px 124px 124px">
                  {countdown.map(([label]) => <HeadCell key={label}>{label}</HeadCell>)}
                  {countdown.map(([label, value]) => <Cell key={label} $h={100}>{value}</Cell>)}
                </Table>
              </Aside>
              <Main>
                <Title>ToDo List : Start adding tasks</Title>
                <SectionHeading $top={71}>Task Name</SectionHeading>
                <Field />
                <SectionHeading $top={27}>Priority</SectionHeading>
                <Field />
                <Button $focused>Add task</Button>
                <SectionHeading $top={27} $bottom={31}>Tasks in progress</SectionHeading>
                <Table $columns="760px 148px 160px 140px 152px">
                  {["Label", "Priority", "Task Status", "Done?", "Delete task"].map((h) => (
                    <HeadCell key={h}>{h}</HeadCell>
                  ))}
                  {tasks.map(([label, priority]) => (
                    <React.Fragment key={label}>
                      <Cell $text>{label}</Cell>
                      <Cell $text>{priority}</Cell>
                      <Cell><Cross /></Cell>
                      <Cell><Button>Done</Button></Cell>
                      <Cell><Button>Delete</Button></Cell>
                    </React.Fragment>
                  ))}
                </Table>
                <SectionHeading $top={31}>Completed Tasks</SectionHeading>
              </Main>
            </Columns>
          </Scrolled>
        </Viewport>
      </BrowserWindow>

      <DockBar>
        {dockGroups.map((group, g) => (
          <React.Fragment key={g}>
            {g > 0 && <DockDivider $before={g === 1 ? 32 : 30} />}
            {group.map(([Icon, running], i) => (
              <DockSlot key={i}>
                <Icon />
                {running && <RunningDot />}
              </DockSlot>
            ))}
          </React.Fragment>
        ))}
      </DockBar>
    </Desktop>
  );
}
